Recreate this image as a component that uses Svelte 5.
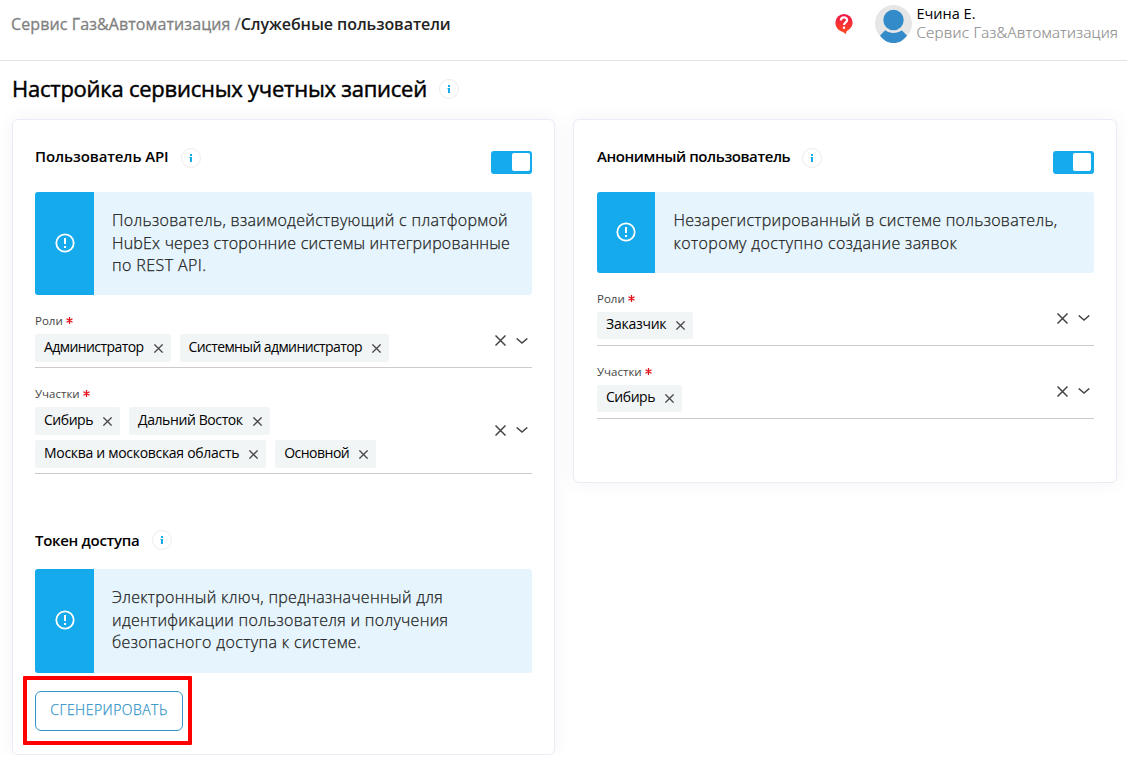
<script>
  const apiUser = {
    title: 'Пользователь API',
    track: -0.1,
    notice: [
      ['Пользователь, взаимодействующий с платформой', 0.32],
      ['HubEx через сторонние системы интегрированные', 0.2],
      ['по REST API.', 0.4]
    ],
    fields: [
      { label: 'Роли', rows: [[['Администратор', -0.58], ['Системный администратор', -0.6]]] },
      {
        label: 'Участки',
        rows: [
          [['Сибирь', -0.47], ['Дальний Восток', -0.4]],
          [['Москва и московская область', -0.3], ['Основной', -0.5]]
        ]
      }
    ]
  };
  const anonymous = {
    title: 'Анонимный пользователь',
    track: -0.42,
    notice: [
      ['Незарегистрированный в системе пользователь,', 0.28],
      ['которому доступно создание заявок', 0.38]
    ],
    fields: [
      { label: 'Роли', rows: [[['Заказчик', -0.25]]] },
      { label: 'Участки', rows: [[['Сибирь', -0.47]]] }
    ]
  };
  const tokenNotice = [
    ['Электронный ключ, предназначенный для', 0.28],
    ['идентификации пользователя и получения', 0.28],
    ['безопасного доступа к системе.', 0.38]
  ];
</script>

{#snippet info()}
  <span class="info" aria-hidden="true">
    <svg width="4" height="8" viewBox="0 0 4 8"><path d="M1 0h2v2H1zM0.5 3H3v5H1V4H.5z" fill="#15aaeb" /></svg>
  </span>
{/snippet}

{#snippet notice(lines)}
  <div class="notice">
    <div class="strip">
      <svg width="20" height="20" viewBox="0 0 20 20" fill="none" stroke="#fff">
        <circle cx="10" cy="10" r="8.7" stroke-width="1.8" />
        <path d="M10 5v6M10 13v2" stroke-width="2" />
      </svg>
    </div>
    <div class="lines">
      {#each lines as [text, track]}
        <span style:letter-spacing="{track}px">{text}</span>
      {/each}
    </div>
  </div>
{/snippet}

{#snippet field(f)}
  <div class="field" class:tall={f.rows.length > 1}>
    <div class="label">
      {f.label}
      <svg width="7" height="7" viewBox="0 0 7 7" stroke="#e3131b" stroke-width="1.3"><path d="M3.5 0v7M.5 1.7l6 3.6M6.5 1.7l-6 3.6" /></svg>
    </div>
    <div class="control">
      <div class="rows">
        {#each f.rows as row}
          <div class="row">
            {#each row as [name, track]}
              <div class="chip">
                <span style:letter-spacing="{track}px">{name}</span>
                <svg width="9" height="9" viewBox="0 0 9 9" stroke="#484848" stroke-width="1.3"><path d="M.4.4l8.2 8.2M8.6.4L.4 8.6" /></svg>
              </div>
            {/each}
          </div>
        {/each}
      </div>
      <div class="tools">
        <svg width="11" height="11" viewBox="0 0 11 11" stroke="#444" stroke-width="1.5"><path d="M.5.5l10 10M10.5.5l-10 10" /></svg>
        <svg width="12" height="6" viewBox="0 0 12 6" fill="none" stroke="#444" stroke-width="1.5"><path d="M.7.5L6 5 11.3.5" /></svg>
      </div>
    </div>
  </div>
{/snippet}

{#snippet user(u)}
  <div class="head">
    <h2 style:letter-spacing="{u.track}px">{u.title}</h2>
    {@render info()}
    <div class="toggle"><i></i></div>
  </div>
  {@render notice(u.notice)}
  {#each u.fields as f}
    {@render field(f)}
  {/each}
{/snippet}

<header>
  <div class="crumbs"><span class="org">Сервис Газ&amp;Автоматизация /</span><b>Служебные пользователи</b></div>
  <svg class="help" width="18" height="21" viewBox="0 0 18 21">
    <defs><linearGradient id="helpFill" x1="0" y1="0" x2="0" y2="1"><stop offset="0" stop-color="#ee1748" /><stop offset="1" stop-color="#ff4b1f" /></linearGradient></defs>
    <path d="M9 0a8.600 8.600 0 0 1 8.600 8.600c0 4-2.400 6.700-5.800 8.400L10.800 20 7.500 17.800C3.400 17 .4 13.300.4 8.600A8.600 8.600 0 0 1 9 0z" fill="url(#helpFill)" />
    <path d="M5.900 6.600C5.900 2.400 12.100 2.500 12.100 6.200c0 2.300-3.100 2.200-3.100 4.900" fill="none" stroke="#fff" stroke-width="2.200" />
    <path d="M7.900 12.600h2.200v2.200H7.900z" fill="#fff" />
  </svg>
  <svg class="avatar" width="37" height="38" viewBox="0 0 37 38">
    <circle cx="18.500" cy="18.500" r="18.500" fill="#e6e6e6" />
    <ellipse cx="18.500" cy="15" rx="10.200" ry="10.300" fill="#338bc9" />
    <path d="M5 30.500l5.300-5.200c4.400 3.700 12 3.700 16.400 0l5.300 5.200C28.500 35.500 24 38 18.500 38S8.500 35.500 5 30.500z" fill="#338bc9" />
  </svg>
  <div class="who"><span class="name">Ечина Е.</span><span class="company">Сервис Газ&amp;Автоматизация</span></div>
</header>

<main>
  <div class="title"><h1>Настройка сервисных учетных записей</h1>{@render info()}</div>
  <div class="cards">
    <section class="api">
      {@render user(apiUser)}
      <div class="head token"><h2>Токен доступа</h2>{@render info()}</div>
      {@render notice(tokenNotice)}
      <div class="highlight"><button>СГЕНЕРИРОВАТЬ</button></div>
    </section>
    <section class="anon">{@render user(anonymous)}</section>
  </div>
</main>

<style>
  :global(body) { background: #fff; overflow: hidden; font-family: 'Open Sans', sans-serif; color: #000; }
  :global(*) { box-sizing: border-box; }
  svg { display: block; flex: none; }
  h1, h2 { margin: 0; white-space: nowrap; }
  header { display: flex; height: 61px; border-bottom: 1px solid #e3e3e3; }
  .crumbs { flex: none; width: 835px; padding: 12px 0 0 11px; font-size: 16px; line-height: 24px; white-space: nowrap; }
  .org { color: #808080; font-weight: 400; letter-spacing: 0.100px; -webkit-text-stroke: 0.300px #808080; }
  .crumbs b { color: #222; font-weight: 600; font-size: 16px; letter-spacing: -0.060px; }
  .help { margin-top: 14px; }
  .avatar { margin: 5px 0 0 22px; }
  .who { display: flex; flex-direction: column; padding: 4px 0 0 4.500px; font-size: 15px; line-height: 20px; white-space: nowrap; }
  .name { font-weight: 400; font-size: 14.500px; }
  .company { color: #8d8d8d; font-weight: 300; line-height: 17px; letter-spacing: 0.270px; -webkit-text-stroke: 0.200px #8d8d8d; }
  main { padding: 0 10px 0 12px; }
  .title { display: flex; align-items: center; gap: 12px; height: 58px; padding-bottom: 2px; }
  h1 { font-size: 22px; font-weight: 400; letter-spacing: -0.240px; line-height: 30px; margin-top: -3px; -webkit-text-stroke: 0.450px #000; }
  .info { display: flex; align-items: center; justify-content: center; flex: none; width: 20px; height: 20px; border: 1px solid #ececec; border-radius: 50%; background: #fff; }
  .cards { display: grid; grid-template-columns: 543px 544px; gap: 18px; align-items: start; }
  section { border: 1px solid #e9ecf5; border-radius: 6px; background: #fff; box-shadow: 0 0 20px rgba(0, 0, 0, 0.05); padding: 0 22px; }
  .anon { padding: 0 22px 0 23px; height: 364px; }
  .api { height: 636px; }
  .head { display: flex; height: 72px; }
  h2 { font-size: 15px; line-height: 20px; font-weight: 600; margin-top: 26px; }
  .head .info { margin: 28px 0 0 12px; }
  .toggle { width: 41px; height: 23px; margin: 31px 0 0 auto; padding: 2px; border-radius: 3px; background: #15aaeb; }
  .toggle i { display: block; width: 18px; height: 18px; margin-left: auto; border-radius: 2px; background: #fff; }
  .anon .toggle { padding-right: 3px; }
  .notice { display: flex; border-radius: 3px; overflow: hidden; background: #e6f5fd; }
  .strip { display: flex; align-items: center; justify-content: center; width: 59px; padding-bottom: 1px; background: #15aaeb; }
  .anon .strip { width: 58px; padding: 0; }
  .lines { display: flex; flex-direction: column; padding: 17px 0 18.500px 18px; font-size: 16px; line-height: 22.600px; font-weight: 300; color: #222; -webkit-text-stroke: 0.250px #222; white-space: nowrap; }
  .anon .lines { padding-left: 18.500px; }
  .field { height: 73px; padding-top: 18px; }
  .field.tall { height: 106px; }
  .label { display: flex; align-items: center; gap: 3px; height: 15px; margin-bottom: 2px; font-size: 11.500px; color: #444; }
  .control { display: flex; justify-content: space-between; border-bottom: 1px solid #cbcbcb; padding: 4px 0 5.500px; }
  .rows { display: grid; gap: 5.500px; }
  .row { display: flex; gap: 9px; }
  .chip { display: flex; align-items: center; height: 27.500px; padding: 0 8px 0 9px; gap: 10px; border-radius: 2px; background: #f2f5f6; font-size: 14px; white-space: nowrap; }
  .chip span { margin-top: -3px; }
  .chip svg { margin-top: 1px; }
  .tools { display: flex; align-items: center; gap: 10px; padding: 0 4px 15px 0; }
  .anon .tools { padding-bottom: 14px; }
  .token { height: 71px; margin-top: 24px; }
  .token h2 { letter-spacing: -0.300px; margin-top: 32px; }
  .token .info { margin-top: 32px; margin-left: 13px; }
  .highlight { width: 169px; height: 69px; margin: 3px 0 0 -12px; padding: 11px 5px; border: 4px solid #fe0000; border-radius: 1px; }
  button { display: block; width: 148px; height: 40px; margin-left: 3px; padding: 0 0 2px; border: 1px solid #3195c9; border-radius: 6px; background: #fff; color: #3195c9; font: 300 14px 'Open Sans', sans-serif; letter-spacing: 0.480px; -webkit-text-stroke: 0.250px #3195c9; }
</style>
